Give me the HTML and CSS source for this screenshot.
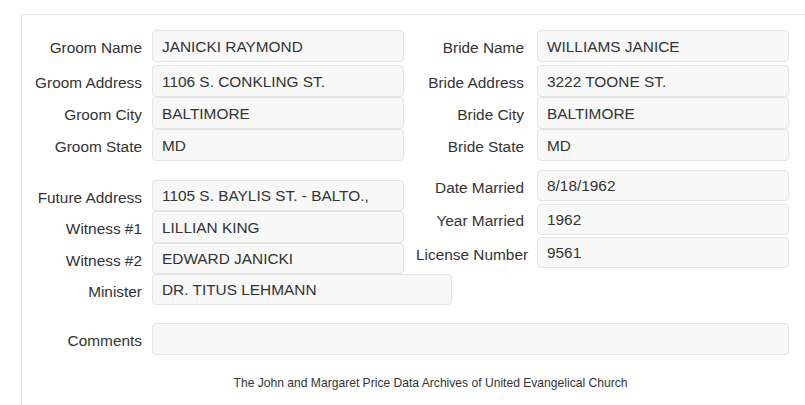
FILE: index.html
```html
<!DOCTYPE html>
<html>
<head>
<meta charset="utf-8">
<link rel="stylesheet" href="styles.css">
</head>
<body>
<div class="panel">
  <div class="section s1">
    <div class="col left">
      <div class="row first"><span class="label">Groom Name</span><div class="field">JANICKI RAYMOND</div></div>
      <div class="row"><span class="label">Groom Address</span><div class="field">1106 S. CONKLING ST.</div></div>
      <div class="row"><span class="label">Groom City</span><div class="field">BALTIMORE</div></div>
      <div class="row"><span class="label">Groom State</span><div class="field">MD</div></div>
    </div>
    <div class="col right">
      <div class="row first"><span class="label">Bride Name</span><div class="field">WILLIAMS JANICE</div></div>
      <div class="row"><span class="label">Bride Address</span><div class="field">3222 TOONE ST.</div></div>
      <div class="row"><span class="label">Bride City</span><div class="field">BALTIMORE</div></div>
      <div class="row"><span class="label">Bride State</span><div class="field">MD</div></div>
    </div>
  </div>
  <div class="section s2">
    <div class="col left">
      <div class="row h31"><span class="label">Future Address</span><div class="field">1105 S. BAYLIS ST. - BALTO.,</div></div>
      <div class="row"><span class="label">Witness #1</span><div class="field">LILLIAN KING</div></div>
      <div class="row h31"><span class="label">Witness #2</span><div class="field">EDWARD JANICKI</div></div>
      <div class="row h31"><span class="label">Minister</span><div class="field wide">DR. TITUS LEHMANN</div></div>
    </div>
    <div class="col right spaced">
      <div class="row h31"><span class="label">Date Married</span><div class="field">8/18/1962</div></div>
      <div class="row h31"><span class="label">Year Married</span><div class="field">1962</div></div>
      <div class="row h31"><span class="label">License Number</span><div class="field">9561</div></div>
    </div>
  </div>
  <div class="row comments"><span class="label">Comments</span><div class="field full"></div></div>
  <div class="footer">The John and Margaret Price Data Archives of United Evangelical Church</div>
</div>
</body>
</html>
```

FILE: styles.css
```css
html, body {
  margin: 0;
  padding: 0;
  overflow: hidden;
  background: #ffffff;
}
body {
  font-family: "Liberation Sans", Arial, sans-serif;
  color: #333333;
  font-size: 15.4px;
}
.panel {
  margin-top: 14px;
  margin-left: 21px;
  width: 818px;
  height: 391px;
  border-top: 1px solid #e6e6e6;
  border-left: 1px solid #e6e6e6;
  box-sizing: border-box;
}
.section {
  display: flex;
  align-items: flex-start;
}
.s1 {
  padding-top: 15px;
}
.s2 {
  padding-top: 9px;
}
.s2 .left {
  padding-top: 10px;
}
.col {
  display: flex;
  flex-direction: column;
}
.col.left {
  width: 382px;
}
.row {
  display: flex;
  align-items: center;
  height: 32px;
}
.row.first {
  margin-bottom: 3px;
}
.row.h31 {
  height: 31px;
}
.spaced {
  gap: 2.5px;
}
.label {
  flex: none;
  white-space: nowrap;
  text-align: right;
  box-sizing: border-box;
  padding-top: 4px;
}
.left .label, .comments .label {
  width: 130px;
  padding-right: 10px;
}
.right .label {
  width: 133px;
  padding-left: 12px;
  padding-right: 13px;
}
.field {
  flex: none;
  width: 252px;
  height: 100%;
  box-sizing: border-box;
  background: #f8f8f8;
  border: 1px solid #e4e4e4;
  border-radius: 4px;
  padding-left: 9px;
  padding-top: 1px;
  display: flex;
  align-items: center;
  color: #333333;
  white-space: nowrap;
}
.field.wide {
  width: 300px;
}
.field.full {
  width: 637px;
}
.comments {
  margin-top: 18px;
}
.footer {
  margin-top: 21px;
  text-align: center;
  font-size: 12.1px;
  line-height: 14px;
  color: #333333;
}
```
